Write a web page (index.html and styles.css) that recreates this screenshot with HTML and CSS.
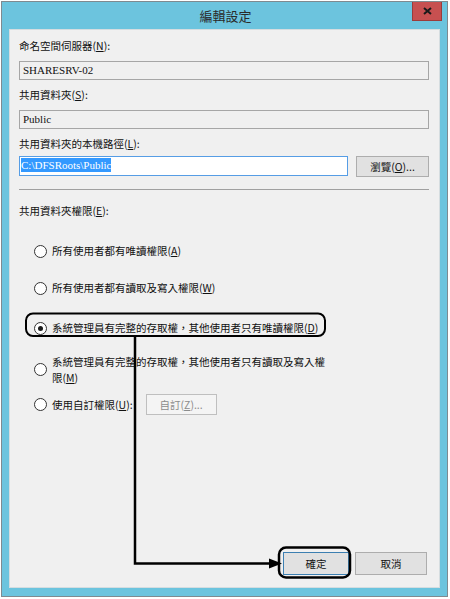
FILE: index.html
```html
<!DOCTYPE html>
<html lang="zh-Hant">
<head>
  <meta charset="UTF-8">
  <title>編輯設定</title>
  <link rel="stylesheet" href="styles.css">
</head>
<body>
  <div class="window">
    <!-- Title bar -->
    <div class="titlebar">
      <span></span>
      <span class="title">編輯設定</span>
      <span class="close-btn">
        <svg width="9" height="8" viewBox="0 0 9 8"><path d="M1 1 L8 7 M8 1 L1 7" stroke="#1a1a1a" stroke-width="2"/></svg>
      </span>
    </div>

    <div class="panel">
      <div class="field-label">命名空間伺服器(<u>N</u>):</div>
      <div class="textbox readonly">SHARESRV-02</div>

      <div class="field-label">共用資料夾(<u>S</u>):</div>
      <div class="textbox readonly">Public</div>

      <div class="field-label">共用資料夾的本機路徑(<u>L</u>):</div>
      <div class="path-row">
        <div class="textbox focused"><span class="selected">C:\DFSRoots\Public</span></div>
        <button class="btn browse-btn">瀏覽(<u>O</u>)...</button>
      </div>

      <div class="separator"></div>

      <div class="field-label perm-label">共用資料夾權限(<u>E</u>):</div>
      <div class="options">
        <div class="option"><span class="radio"></span><span>所有使用者都有唯讀權限(<u>A</u>)</span></div>
        <div class="option"><span class="radio"></span><span>所有使用者都有讀取及寫入權限(<u>W</u>)</span></div>
        <div class="option"><span class="radio checked"></span><span>系統管理員有完整的存取權，其他使用者只有唯讀權限(<u>D</u>)</span></div>
        <div class="option wrap"><span class="radio"></span><span class="wrap-text">系統管理員有完整的存取權，其他使用者只有讀取及寫入權<br>限(<u>M</u>)</span></div>
        <div class="option custom"><span class="radio"></span><span>使用自訂權限(<u>U</u>):</span><button class="btn disabled custom-btn">自訂(<u>Z</u>)...</button></div>
      </div>

      <div class="actions">
        <button class="btn default-btn">確定</button>
        <button class="btn cancel-btn">取消</button>
      </div>
    </div>
  </div>

  <!-- Annotation overlay -->
  <svg class="annotations" width="450" height="599" viewBox="0 0 450 599">
    <rect x="26" y="313.5" width="299" height="22.5" rx="7" fill="none" stroke="#000" stroke-width="2"/>
    <path d="M135 336 V563.5 H272" fill="none" stroke="#000" stroke-width="2.5"/>
    <polygon points="269,558.5 282,563.5 269,568.5" fill="#000"/>
    <rect x="279" y="547.5" width="71" height="30" rx="7" fill="none" stroke="#000" stroke-width="2.5"/>
  </svg>
</body>
</html>
```

FILE: styles.css
```css
body {
  margin: 0;
  background-color: #fff;
  font-family: "Noto Sans CJK TC", "Noto Sans", sans-serif;
  font-size: 10.5px;
  color: #111;
}
u {
  text-decoration: underline;
  text-underline-offset: 1px;
}
.window {
  margin: 1px 0 0 1px;
  width: 431px;
  border: 1px solid #7f8a90;
  padding: 0 7px 8px 7px;
  background-color: #6cc4de;
}
.titlebar {
  display: grid;
  grid-template-columns: 1fr auto 1fr;
  align-items: start;
  height: 27px;
  margin: 0 -7px;
  padding: 0 5px 0 7px;
}
.title {
  font-size: 13px;
  line-height: 27px;
  color: #2a2a2a;
}
.close-btn {
  justify-self: end;
  display: flex;
  align-items: center;
  justify-content: center;
  width: 28px;
  height: 18px;
  background-color: #c75050;
  border: 1px solid #9c3b3b;
  border-top: none;
}
.panel {
  display: flex;
  flex-direction: column;
  height: 559px;
  box-sizing: border-box;
  padding: 9px 10px 12px 9px;
  background-color: #f0f0f0;
  border: 1px solid #d5dde0;
}
.field-label {
  line-height: 14px;
  margin-bottom: 8px;
}
.textbox {
  height: 19px;
  box-sizing: border-box;
  border: 1px solid #abadb3;
  padding: 1px 3px;
  font-family: "Liberation Serif", serif;
  font-size: 11px;
  line-height: 15px;
  margin-bottom: 8px;
}
.readonly {
  background-color: #f0f0f0;
  border-color: #a6a6a6;
}
.path-row {
  display: flex;
  gap: 8px;
  margin-top: -3px;
}
.focused {
  flex: 1;
  height: 20px;
  background-color: #fff;
  border-color: #569de5;
  padding: 1px 1px;
  margin-bottom: 0;
}
.selected {
  background-color: #3399ff;
  color: #fff;
  padding: 1px 0;
}
.btn {
  font-family: inherit;
  font-size: 10.5px;
  color: #111;
  background-color: #e1e1e1;
  border: 1px solid #adadad;
  padding: 0;
  margin: 0;
}
.browse-btn {
  width: 73px;
  height: 21px;
}
.separator {
  height: 1px;
  background-color: #a0a0a0;
  margin: 12px 0 14px 0;
}
.perm-label {
  margin-bottom: 0;
}
.options {
  display: flex;
  flex-direction: column;
  padding-left: 15px;
  margin-top: 26px;
}
.option {
  display: flex;
  align-items: center;
  gap: 5px;
  line-height: 14px;
  margin-bottom: 23px;
}
.option:nth-child(2) {
  margin-bottom: 26px;
}
.option:nth-child(3) {
  margin-bottom: 19px;
}
.wrap-text {
  width: 278px;
  line-height: 15.5px;
}
.option.wrap {
  margin-bottom: 9px;
}
.radio {
  flex: none;
  width: 11px;
  height: 11px;
  border: 1px solid #333;
  border-radius: 50%;
  background-color: #fff;
  position: relative;
}
.radio.checked::after {
  content: "";
  position: absolute;
  left: 3px;
  top: 3px;
  width: 5px;
  height: 5px;
  border-radius: 50%;
  background-color: #1a1a1a;
}
.custom-btn {
  width: 71px;
  height: 21px;
  margin-left: 8px;
}
.disabled {
  background-color: #f4f4f4;
  border-color: #bfbfbf;
  color: #8c8c8c;
}
.actions {
  margin-top: auto;
  display: flex;
  justify-content: flex-end;
  gap: 6px;
}
.default-btn {
  width: 66px;
  height: 23px;
  border-color: #3c7fb1;
}
.cancel-btn {
  width: 72px;
  height: 23px;
  margin-right: 2px;
}
.annotations {
  position: absolute;
  top: 0;
  left: 0;
  pointer-events: none;
}
```
